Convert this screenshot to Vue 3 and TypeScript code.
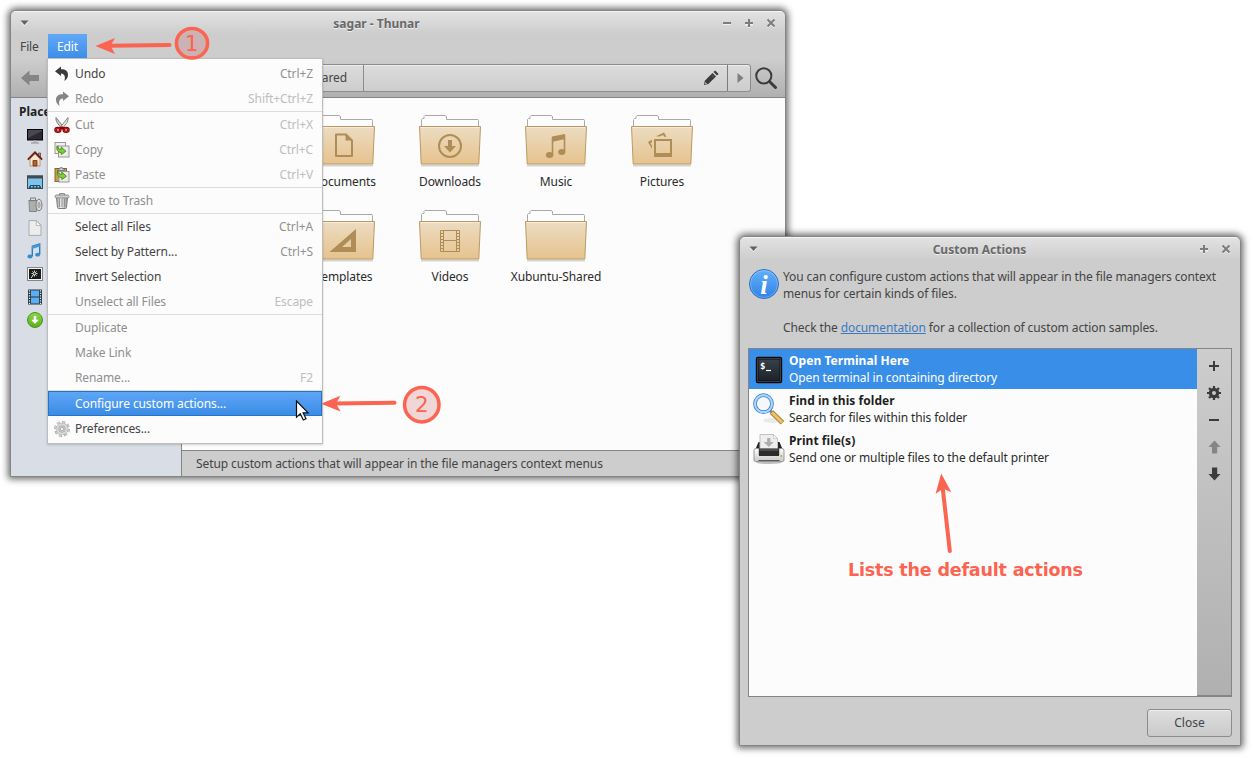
<script setup lang="ts">
interface MenuRow {
  label?: string
  key?: string
  icon?: string
  state?: 'disabled' | 'active'
}

const menu: MenuRow[] = [
  { label: 'Undo', key: 'Ctrl+Z', icon: 'undo' },
  { label: 'Redo', key: 'Shift+Ctrl+Z', icon: 'redo', state: 'disabled' },
  {},
  { label: 'Cut', key: 'Ctrl+X', icon: 'cut', state: 'disabled' },
  { label: 'Copy', key: 'Ctrl+C', icon: 'copy', state: 'disabled' },
  { label: 'Paste', key: 'Ctrl+V', icon: 'paste', state: 'disabled' },
  {},
  { label: 'Move to Trash', icon: 'bin', state: 'disabled' },
  {},
  { label: 'Select all Files', key: 'Ctrl+A' },
  { label: 'Select by Pattern...', key: 'Ctrl+S' },
  { label: 'Invert Selection' },
  { label: 'Unselect all Files', key: 'Escape', state: 'disabled' },
  {},
  { label: 'Duplicate', state: 'disabled' },
  { label: 'Make Link', state: 'disabled' },
  { label: 'Rename...', key: 'F2', state: 'disabled' },
  {},
  { label: 'Configure custom actions...', state: 'active' },
  { label: 'Preferences...', icon: 'gear' },
]

const places: { icon: string; label?: string }[] = [
  { icon: 'monitor' },
  { icon: 'home' },
  { icon: 'desktop' },
  { icon: 'trash', label: 'Trash' },
  { icon: 'doc' },
  { icon: 'music' },
  { icon: 'photo' },
  { icon: 'film', label: 'Videos' },
  { icon: 'download' },
]

const folders = [
  { name: 'Documents', glyph: 'g-doc' },
  { name: 'Downloads', glyph: 'g-down' },
  { name: 'Music', glyph: 'g-music' },
  { name: 'Pictures', glyph: 'g-pic' },
  { name: 'Templates', glyph: 'g-tpl' },
  { name: 'Videos', glyph: 'g-vid' },
  { name: 'Xubuntu-Shared', glyph: '' },
]

const actions = [
  { name: 'Open Terminal Here', text: 'Open terminal in containing directory', icon: 'terminal', on: true },
  { name: 'Find in this folder', text: 'Search for files within this folder', icon: 'lens', on: false },
  { name: 'Print file(s)', text: 'Send one or multiple files to the default printer', icon: 'printer', on: false },
]
</script>

<template>
  <div class="screen">
    <svg class="defs" width="0" height="0">
      <defs>
        <linearGradient id="tan" x1="0" y1="0" x2="0" y2="1">
          <stop offset="0" stop-color="#ecdcc2" /><stop offset="1" stop-color="#e6c38e" />
        </linearGradient>
        <linearGradient id="sky" x1="0" y1="0" x2="0" y2="1">
          <stop offset="0" stop-color="#64b0fb" /><stop offset="1" stop-color="#2f82e6" />
        </linearGradient>
        <linearGradient id="leaf" x1="0" y1="0" x2="0" y2="1">
          <stop offset="0" stop-color="#8ed64a" /><stop offset="1" stop-color="#5cac1c" />
        </linearGradient>
        <linearGradient id="steel" x1="0" y1="0" x2="1" y2="0">
          <stop offset="0" stop-color="#9d9d9d" /><stop offset=".4" stop-color="#ececec" /><stop offset="1" stop-color="#959595" />
        </linearGradient>
        <linearGradient id="slate" x1="0" y1="0" x2="0" y2="1">
          <stop offset="0" stop-color="#37414b" /><stop offset="1" stop-color="#1c2228" />
        </linearGradient>
        <linearGradient id="paper" x1="0" y1="0" x2="0" y2="1">
          <stop offset="0" stop-color="#fdfdfd" /><stop offset="1" stop-color="#c8c8c8" />
        </linearGradient>
      </defs>

      <symbol id="undo" viewBox="0 0 16 16">
        <path d="M1 5.200 7 .6v2.700c4.800 0 7 2 7 5.500 0 2.800-1.300 4.700-3.600 6.200C11.500 11 11 8 7 7.500v2.400Z" fill="#3b3b3b" />
      </symbol>
      <symbol id="redo" viewBox="0 0 16 16">
        <path d="M15 5.200 9 .6v2.700C4.200 3.300 2 5.300 2 8.800c0 2.800 1.300 4.700 3.600 6.200C4.500 11 5 8 9 7.500v2.400Z" fill="#858585" />
      </symbol>
      <symbol id="cut" viewBox="0 0 16 16">
        <path d="M2 .5Q1.500 3 3 5.500L7.400 11.300 9.500 10Z" fill="#d0d3cd" stroke="#686b66" stroke-width=".8" />
        <path d="M14 .5Q14.500 3 13 5.500L8.600 11.300 6.500 10Z" fill="#eceeea" stroke="#686b66" stroke-width=".8" />
        <path d="m5.500 10.500 2.500-1.200 2.500 1.200-1 2h-3Z" fill="#a40000" />
        <ellipse cx="3.900" cy="12.900" rx="2.400" ry="1.800" fill="none" stroke="#800000" stroke-width="2.500" />
        <ellipse cx="12.100" cy="12.900" rx="2.400" ry="1.800" fill="none" stroke="#800000" stroke-width="2.500" />
        <ellipse cx="3.900" cy="12.900" rx="2.400" ry="1.800" fill="none" stroke="#d02020" />
        <ellipse cx="12.100" cy="12.900" rx="2.400" ry="1.800" fill="none" stroke="#d02020" />
      </symbol>
      <symbol id="arrow-leaf" viewBox="0 0 10 10">
        <path d="M1 .8C1 4 2.500 4.500 5 4.500V2.300l4.700 4.100L5 9.900V7.800C1.500 7.800-.5 4.500 1 .8Z" fill="#7fcf35" stroke="#3b7d0c" stroke-width=".8" />
      </symbol>
      <symbol id="copy" viewBox="0 0 16 16">
        <rect x="1" y=".5" width="10.500" height="11" fill="#f0f0f0" stroke="#989898" />
        <rect x="4.500" y="4" width="10.500" height="11" fill="#ebebeb" stroke="#989898" />
        <use href="#arrow-leaf" x="2" y="2.800" width="10.500" height="10" />
      </symbol>
      <symbol id="paste" viewBox="0 0 16 16">
        <rect x="1" y="1.500" width="11.500" height="13" fill="#c99c54" stroke="#8a6528" />
        <path d="M4 3.500V2h1.500L6 .7h2.500L9 2h1.500v1.500Z" fill="#c9c9c9" stroke="#666" stroke-width=".7" />
        <rect x="5" y="4.500" width="10" height="10.500" fill="#ebebeb" stroke="#989898" />
        <use href="#arrow-leaf" x="2.500" y="2.800" width="10.500" height="10" />
      </symbol>
      <symbol id="bin" viewBox="0 0 16 16">
        <path d="M2.500 4.500h11l-1 10q-.2 1-1 1h-7q-.8 0-1-1Z" fill="url(#steel)" stroke="#7c7c7c" />
        <path d="M5.500 6v8M8 6v8M10.500 6v8" stroke="#8b8b8b" stroke-width=".9" />
        <rect x="1" y="2" width="14" height="3" rx="1.500" fill="#cfcfcf" stroke="#777" stroke-width=".8" />
        <path d="M5.500 2V.7h5V2" fill="none" stroke="#777" />
      </symbol>
      <symbol id="gear" viewBox="0 0 16 16">
        <circle cx="8" cy="8" r="6.800" fill="none" stroke="#9b9b9b" stroke-width="2.200" stroke-dasharray="3.100 2.240" />
        <circle cx="8" cy="8" r="6.900" fill="none" stroke="#dedede" stroke-width="1.100" stroke-dasharray="2.300 3.120" stroke-dashoffset="-.4" />
        <circle cx="8" cy="8" r="5.900" fill="#dadada" stroke="#b0b0b0" stroke-width=".6" />
        <circle cx="8" cy="8" r="3.300" fill="#cfcfcf" stroke="#aaa" stroke-width=".8" />
        <circle cx="8" cy="8" r="1.600" fill="#fbfbfb" stroke="#9a9a9a" stroke-width=".7" />
      </symbol>

      <symbol id="monitor" viewBox="0 0 16 16">
        <rect x=".5" y="1.500" width="15" height="10.500" fill="#2d2932" stroke="#050505" />
        <path d="M1 2h14v1L1 10Z" fill="#4b4651" />
        <path d="M6.500 12.500h3l.5 2H6Z" fill="#b9b9b9" />
        <path d="M4 15h8" stroke="#8b8b8b" />
      </symbol>
      <symbol id="home" viewBox="0 0 16 16">
        <path d="M11.500 2h2v5h-2Z" fill="#b0a090" stroke="#5b3020" stroke-width=".7" />
        <path d="M3 8 8 3l5 5v7H3Z" fill="#f8e4cb" stroke="#a38c73" stroke-width=".8" />
        <path d="M.8 8.700 8 1.300l7.200 7.400" fill="none" stroke="#6b1c14" stroke-width="1.700" />
        <path d="M6 15V9.500h4V15Z" fill="#b5622c" stroke="#66310f" stroke-width=".8" />
      </symbol>
      <symbol id="desktop" viewBox="0 0 16 16">
        <rect x=".5" y="2" width="15" height="12.500" fill="#7cc4ee" stroke="#3c4850" />
        <path d="M0 1.500h16v3H0Z" fill="#3f4a52" />
        <path d="M2 14.500v-1.500l1.500-2h9l1.500 2v1.500Z" fill="#284a5c" />
        <path d="M4 12.800h1.700M7.200 12.800h1.700M10.400 12.800h1.700" stroke="#8fd0f5" stroke-width="1.500" />
      </symbol>
      <symbol id="trash" viewBox="0 0 16 16">
        <path d="M2 4h8l-.5 10.500h-7Z" fill="#c3c3c3" stroke="#858585" />
        <path d="M4 5v9M6 5v9M8 5v9" stroke="#8e8e8e" stroke-width=".8" />
        <path d="M3.500 3V1h5v2M1.500 3.500h9" fill="none" stroke="#7c7c7c" />
        <ellipse cx="12" cy="8" rx="3" ry="5.800" fill="#dedede" stroke="#7c7c7c" />
        <ellipse cx="12" cy="8" rx="1.200" ry="2.900" fill="#b7b7b7" stroke="#909090" stroke-width=".6" />
      </symbol>
      <symbol id="doc" viewBox="0 0 16 16">
        <path d="M2 .6h7.500l4.500 4.600v10.200H2Z" fill="#ededed" stroke="#a5a5a5" stroke-width=".9" />
        <path d="M9.300.8v4.700h4.600Z" fill="#fff" stroke="#aaa" stroke-width=".8" />
      </symbol>
      <symbol id="music" viewBox="0 0 16 16">
        <path d="M5.300 13V3.200L12.700 1v10.500" fill="none" stroke="#287fb8" stroke-width="1.400" />
        <path d="M5 3.200 13 .9v2.700L5 6Z" fill="#3f9bd3" />
        <ellipse cx="3" cy="13.500" rx="2.600" ry="1.900" fill="#338fcb" />
        <ellipse cx="10.600" cy="11.700" rx="2.500" ry="1.900" fill="#338fcb" />
      </symbol>
      <symbol id="photo" viewBox="0 0 16 16">
        <rect x=".5" y="1.500" width="15" height="13" fill="#f6f6f6" stroke="#858585" />
        <path d="M2 3h12v10H2Z" fill="#1b1b1b" />
        <path d="M7.500 4.500v6M4.500 7.500h6M5.400 5.400l4.200 4.200M9.600 5.400l-4.200 4.200M4 12l3-4" stroke="#eee" stroke-width=".9" />
        <circle cx="7.500" cy="7.500" r="1" fill="#222" />
      </symbol>
      <symbol id="film" viewBox="0 0 16 16">
        <path d="M1 .5h14v15H1Z" fill="#26343d" />
        <path d="M4 1.500h8v6H4ZM4 8.500h8v6H4Z" fill="#5baef4" />
        <path d="M2.500 1.200v14M13.500 1.200v14" stroke="#f2f2f2" stroke-width="1.300" stroke-dasharray="1.300 1.200" />
      </symbol>
      <symbol id="download" viewBox="0 0 16 16">
        <circle cx="8" cy="8" r="7.500" fill="url(#leaf)" stroke="#4b9618" />
        <path d="M6.700 4h2.600v3.700h2.600L8 12 4.100 7.700h2.600Z" fill="#fff" />
      </symbol>

      <symbol id="folder" viewBox="0 0 64 52">
        <path d="M3 50.500h58" stroke="#000" stroke-opacity=".16" stroke-width="2" />
        <path d="M3.500 14V4.500l1-1H6V1.500L7 .5h20l1.500 1v3H60l.5 1V14Z" fill="#fcfcfc" stroke="#a9a9ab" />
        <path d="M1.500 11.500h61L60.800 49H3.200Z" fill="url(#tan)" stroke="#bb9a62" stroke-linejoin="round" />
        <path d="M2.500 12.500h59" stroke="#f7ecd9" />
      </symbol>
      <symbol id="g-doc" viewBox="0 0 64 52">
        <path d="M24 19.500h10l6 6V41H24Z" fill="none" stroke="#b08d56" stroke-width="2" stroke-linejoin="round" />
        <path d="M33.500 18.800v6.700h7Z" fill="#b08d56" />
      </symbol>
      <symbol id="g-down" viewBox="0 0 64 52">
        <circle cx="32" cy="31" r="11" fill="none" stroke="#b08d56" stroke-width="2" />
        <path d="M30 25h4v6h4l-6 6.500-6-6.500h4Z" fill="#b08d56" />
      </symbol>
      <symbol id="g-music" viewBox="0 0 64 52">
        <path d="M28 21.500 41 19v5l-13 3Z" fill="#b08d56" />
        <path d="M28.500 22v18M40.500 20v17" stroke="#b08d56" stroke-width="1.600" />
        <ellipse cx="25.600" cy="40" rx="3.700" ry="2.900" fill="#b08d56" />
        <ellipse cx="37.800" cy="37" rx="3.600" ry="2.900" fill="#b08d56" />
      </symbol>
      <symbol id="g-pic" viewBox="0 0 64 52">
        <path d="M24 24h18v18H24Zm2 2v12h14V26Z" fill="#b08d56" fill-rule="evenodd" />
        <path d="m18 27 4-2.300v2.500l-1.500.8 1.500 2.800v3Z" fill="#b08d56" />
        <path d="m26 21.200 8-3.700 2.500 4.200h-2.300l-1-1.700-3.800 1.600Z" fill="#b08d56" />
      </symbol>
      <symbol id="g-tpl" viewBox="0 0 64 52">
        <path d="M17.500 42 44 19v23Zm12.500-5h9v-8Z" fill="#b08d56" fill-rule="evenodd" />
      </symbol>
      <symbol id="g-vid" viewBox="0 0 64 52">
        <path d="M22.500 20.500h19v21h-19ZM25.500 20.500v21M38.500 20.500v21M25.500 30.500h13" fill="none" stroke="#b08d56" />
        <path d="M22 23.500h3M22 26.500h3M22 29.500h3M22 32.500h3M22 35.500h3M22 38.500h3M39 23.500h3M39 26.500h3M39 29.500h3M39 32.500h3M39 35.500h3M39 38.500h3" stroke="#b08d56" />
      </symbol>

      <symbol id="lens" viewBox="0 0 32 32">
        <ellipse cx="19" cy="27.500" rx="9" ry="2.500" fill="#000" opacity=".07" />
        <path d="m18.500 19 11 10.800" stroke="#a9802f" stroke-width="5" />
        <path d="m18.500 19 10.600 10.400" stroke="#ecc36c" stroke-width="3" />
        <path d="m16 16.500 3 3" stroke="#888" stroke-width="3" />
        <circle cx="10.500" cy="10.700" r="8.500" fill="#f4f8fb" stroke="#3b7ed0" stroke-width="3.700" />
        <circle cx="10.500" cy="10.700" r="8.500" fill="none" stroke="#a9d7f8" stroke-width="2.200" />
      </symbol>
      <symbol id="printer" viewBox="0 0 32 32">
        <ellipse cx="16" cy="29.500" rx="13" ry="1.500" fill="#000" opacity=".25" />
        <path d="M5.500 9h21l3 7h-27Z" fill="#252525" />
        <path d="M7 1.500h13.500l4 4V16H7Z" fill="#eee" stroke="#c2c2c2" />
        <path d="M20.500 1.700v3.800h3.800Z" fill="#fff" stroke="#bbb" stroke-width=".6" />
        <path d="M14.200 5h3.200v4h3.400l-5 5-5-5h3.400Z" fill="#adadad" />
        <path d="M1 17.500q0-2 2-2h3V22h20v-6.500h3q2 0 2 2v9.500q0 1.500-1.500 1.500h-27Q1 28.500 1 27Z" fill="url(#paper)" stroke="#909090" stroke-width=".9" />
        <path d="M6 15.500h20V23H6Z" fill="#2b2b2b" />
        <path d="M6.500 16h19v2h-19Z" fill="#4c4c4c" />
        <path d="M5.500 27.500h21" stroke="#5a5a5a" />
        <circle cx="28.200" cy="23" r=".9" fill="#79c437" />
      </symbol>
      <symbol id="terminal" viewBox="0 0 32 32">
        <rect x="3.500" y="4.500" width="25" height="25" rx="1.500" fill="#7e868e" stroke="#07090b" stroke-width="1.400" />
        <rect x="5" y="6" width="22" height="22" fill="url(#slate)" stroke="#0d1013" />
        <path d="M13 17.500h5" stroke="#fff" stroke-width="1.200" />
      </symbol>
      <symbol id="tri" viewBox="0 0 9 6">
        <path d="M.5 1h8l-4 4.300Z" fill="#fff" opacity=".7" transform="translate(0 .7)" />
        <path d="M.5.5h8l-4 4.500Z" fill="#626262" />
      </symbol>
      <symbol id="min" viewBox="0 0 10 10">
        <path d="M1 6.500h8" stroke="#f0f0f0" /><path d="M1 5h8" stroke="#7c7c7c" stroke-width="2" />
      </symbol>
      <symbol id="max" viewBox="0 0 10 10">
        <path d="M1 6.500h8M5 2v8.200" stroke="#f0f0f0" stroke-width="1.800" /><path d="M1 5h8M5 1v8" stroke="#7c7c7c" stroke-width="2" />
      </symbol>
      <symbol id="shut" viewBox="0 0 10 10">
        <path d="m1.500 2.500 7 7m0-7-7 7" stroke="#f0f0f0" stroke-width="2" /><path d="m1.500 1.500 7 7m0-7-7 7" stroke="#7c7c7c" stroke-width="2" />
      </symbol>
    </svg>

    <section class="window thunar">
      <header class="titlebar">
        <svg class="roll"><use href="#tri" /></svg>
        <span class="title">sagar - Thunar</span>
        <span class="buttons">
          <svg><use href="#min" /></svg>
          <svg><use href="#max" /></svg>
          <svg><use href="#shut" /></svg>
        </span>
      </header>
      <nav class="menubar">
        <span class="menu-head">File</span>
        <span class="menu-head open">Edit</span>
      </nav>
      <div class="toolbar">
        <svg class="back" viewBox="0 0 18 16"><path d="M0 8 8.500.5V5H18v6H8.500v4.500Z" fill="#858585" /></svg>
        <div class="pathbar">
          <span class="crumb">Xubuntu-Shared</span>
          <span class="rest">
            <svg class="pencil" viewBox="0 0 16 16">
              <path d="m1 15 .8-4.300L9.500 3 13 6.500 5.300 14Z" fill="#393939" />
              <path d="m10.500 2 1.600-1.600 3.500 3.500L14 5.500Z" fill="#393939" />
              <path d="m2.300 12.100 1.700 1.700-1.700.4Z" fill="#ddd" />
              <path d="m8.800 5.200 2 2" stroke="#888" stroke-width=".6" />
            </svg>
          </span>
          <span class="next"><svg viewBox="0 0 7 10"><path d="M.5 0 6.500 5 .5 10Z" fill="#7e7e7e" /></svg></span>
        </div>
        <svg class="search" viewBox="0 0 22 22">
          <circle cx="8.800" cy="8.800" r="7.600" fill="none" stroke="#3c3c3c" stroke-width="2" />
          <path d="m14.500 14.500 6 6" stroke="#3c3c3c" stroke-width="3" stroke-linecap="round" />
        </svg>
      </div>
      <div class="panes">
        <aside class="sidebar">
          <div class="heading">Places</div>
          <div v-for="p in places" :key="p.icon" class="place">
            <svg><use :href="'#' + p.icon" /></svg>
            <span>{{ p.label }}</span>
          </div>
        </aside>
        <div class="content">
          <div class="files">
            <figure v-for="f in folders" :key="f.name" class="file">
              <svg viewBox="0 0 64 52">
                <use href="#folder" />
                <use v-if="f.glyph" :href="'#' + f.glyph" />
              </svg>
              <figcaption>{{ f.name }}</figcaption>
            </figure>
          </div>
          <footer class="status">Setup custom actions that will appear in the file managers context menus</footer>
        </div>
      </div>
    </section>

    <div class="menu">
      <template v-for="(m, i) in menu" :key="i">
        <div v-if="m.label" class="item" :class="m.state">
          <svg class="item-icon"><use v-if="m.icon" :href="'#' + m.icon" /></svg>
          <span class="item-label">{{ m.label }}</span>
          <span class="key">{{ m.key }}</span>
        </div>
        <div v-else class="rule"></div>
      </template>
    </div>

    <section class="window dialog">
      <header class="titlebar">
        <svg class="roll"><use href="#tri" /></svg>
        <span class="title">Custom Actions</span>
        <span class="buttons">
          <svg><use href="#max" /></svg>
          <svg><use href="#shut" /></svg>
        </span>
      </header>
      <div class="intro">
        <svg class="info" viewBox="0 0 32 32">
          <circle cx="16" cy="16" r="14.500" fill="url(#sky)" stroke="#2d6fc0" />
          <circle cx="16" cy="16" r="13.500" fill="none" stroke="#fff" stroke-opacity=".25" />
          <text x="16" y="26" text-anchor="middle" class="info-i">i</text>
        </svg>
        <p>You can configure custom actions that will appear in the file managers context<br>menus for certain kinds of files.<br><br>Check the <a>documentation</a> for a collection of custom action samples.</p>
      </div>
      <div class="box">
        <div class="list">
          <div v-for="a in actions" :key="a.name" class="action" :class="{ on: a.on }">
            <svg viewBox="0 0 32 32">
              <use :href="'#' + a.icon" />
              <text v-if="a.icon === 'terminal'" x="7" y="16" class="prompt">$</text>
            </svg>
            <div>
              <b>{{ a.name }}</b>
              <span>{{ a.text }}</span>
            </div>
          </div>
        </div>
        <div class="tools">
          <svg viewBox="0 0 14 14"><path d="M2 7h10M7 2v10" stroke="#3b3b3b" stroke-width="2" /></svg>
          <svg viewBox="0 0 14 14">
            <circle cx="7" cy="7" r="3.600" fill="none" stroke="#3b3b3b" stroke-width="3.200" />
            <path d="M7 0v3M7 11v3M0 7h3M11 7h3M2 2l2 2M10 10l2 2M2 12l2-2M10 4l2-2" stroke="#3b3b3b" stroke-width="2.200" />
          </svg>
          <svg viewBox="0 0 14 14"><path d="M2 7h10" stroke="#3b3b3b" stroke-width="2" /></svg>
          <svg viewBox="0 0 14 14"><path d="M7.500.5 13.500 7h-3.300v6.500H5V7H1.500Z" fill="#858585" /></svg>
          <svg viewBox="0 0 14 14"><path d="M7.500 13.500 13.500 7h-3.300V.5H5V7H1.500Z" fill="#3b3b3b" /></svg>
        </div>
      </div>
      <div class="foot"><button type="button">Close</button></div>
    </section>

    <svg class="notes" width="1253" height="758" viewBox="0 0 1253 758">
      <g fill="#fa6450" stroke="#fa6450">
        <path d="M108 45.800 169.500 45" stroke-width="4" stroke-linecap="round" />
        <path d="m95.500 46 19.500-8-4.500 7.800L115 54Z" stroke="none" />
        <path d="M334 403.500 394.500 402.700" stroke-width="4" stroke-linecap="round" />
        <path d="m321 403.700 19.500-8-4.500 7.700 4.500 8.100Z" stroke="none" />
        <path d="m942.700 488 7.100 63" stroke-width="4" stroke-linecap="round" />
        <path d="m941.200 473.500 10.200 18.700-8.200-3.400-7.600 5Z" stroke="none" />
      </g>
      <g fill="#c85050" fill-opacity=".22" stroke="#fa6450" stroke-width="3.500">
        <ellipse cx="192" cy="43.300" rx="15.600" ry="14.800" />
        <circle cx="421.800" cy="404.700" r="17.200" />
      </g>
      <g class="note-text">
        <text x="191.800" y="51" text-anchor="middle" font-size="21">1</text>
        <text x="421.800" y="412" text-anchor="middle" font-size="21.500">2</text>
        <text x="848" y="576" font-size="17.500" font-weight="700" textLength="235">Lists the default actions</text>
      </g>
      <path d="M296.500 401v16.200l3.800-3.400 3 6.200 2.700-1.300-2.900-5.900h5Z" fill="#fff" stroke="#111" stroke-width="1.200" />
    </svg>
  </div>
</template>

<style>
body {
  background: #fff;
  overflow: hidden;
}
</style>

<style scoped>
.screen {
  position: relative;
  width: 1253px;
  height: 758px;
  background: #fff;
  overflow: hidden;
  color: #444;
  font: 12px/17px "Noto Sans", "Open Sans", sans-serif;
  letter-spacing: -.1px;
}
.screen * { box-sizing: border-box; }
svg { display: block; flex: none; }
.defs { position: absolute; }
.window {
  position: absolute;
  display: flex;
  flex-direction: column;
  border: 1px solid #858585;
  border-radius: 6px 6px 0 0;
  background: #cdcdcd;
  box-shadow: 0 0 7px 2px rgba(0, 0, 0, .6);
  overflow: hidden;
}
.thunar { left: 10px; top: 10px; width: 776px; height: 467px; }
.dialog { left: 739px; top: 236px; width: 502px; height: 510px; }
.titlebar {
  height: 23px;
  flex: none;
  display: grid;
  grid-template-columns: 76px 1fr 76px;
  align-items: center;
  border-top: 1px solid #f6f6f6;
  background: linear-gradient(#e2e2e2, #cdcdcd);
}
.roll { width: 9px; height: 6px; margin-left: 9px; }
.title {
  text-align: center;
  font-weight: 700;
  letter-spacing: 0;
  color: #696969;
  text-shadow: 0 1px 0 #eee;
  padding-top: 1px;
}
.thunar .title { padding-right: 43px; }
.dialog .title { padding-right: 21px; }
.buttons { display: flex; gap: 12px; justify-content: flex-end; padding-right: 9px; }
.buttons svg { width: 10px; height: 10px; }
.menubar { display: flex; height: 25px; flex: none; }
.menu-head { padding: 4px 9px; line-height: 17px; width: 37px; }
.menu-head.open { background: linear-gradient(#62a8f8, #3b8de8); color: #fff; width: 39px; }
.toolbar {
  display: flex;
  align-items: center;
  flex: none;
  height: 39px;
  padding: 0 8px 1px 10px;
  border-bottom: 1px solid #858585;
  background: linear-gradient(#cdcdcd, #b0b0b0);
}
.back { width: 18px; height: 16px; }
.pathbar {
  display: flex;
  margin: 0 4px 0 200px;
  flex: 1;
  height: 28px;
  border: 1px solid #8c8c8c;
  border-radius: 3px;
  background: linear-gradient(#dcdcdc, #cdcdcd);
  box-shadow: inset 0 1px #eee;
}
.crumb {
  width: 124px;
  padding: 4px 16px 0 0;
  text-align: right;
  border-right: 1px solid #8c8c8c;
}
.rest { flex: 1; display: flex; justify-content: flex-end; align-items: center; padding-right: 8px; }
.pencil { width: 16px; height: 16px; }
.next { width: 23px; border-left: 1px solid #7c7c7c; display: flex; align-items: center; justify-content: center; padding-left: 2px; }
.next svg { width: 7px; height: 10px; }
.search { width: 22px; height: 22px; }
.panes { display: flex; flex: 1; min-height: 0; }
.sidebar { width: 170px; background: #d9dee6; }
.heading { font-weight: 700; letter-spacing: 0; color: #222; padding: 5px 0 0 8px; height: 26px; }
.place { display: flex; align-items: center; gap: 4px; height: 23px; padding-left: 16px; }
.place svg { width: 16px; height: 16px; }
.content { flex: 1; display: flex; flex-direction: column; border-left: 1px solid #858585; background: #fcfcfc; }
.files {
  flex: 1;
  display: grid;
  grid-template-columns: repeat(4, 106px);
  grid-auto-rows: 95px;
  padding: 17px 0 0 109px;
}
.file { margin: 0; display: flex; flex-direction: column; align-items: center; color: #2b2b2b; white-space: nowrap; }
.file svg { width: 64px; height: 52px; margin-bottom: 6px; }
.status { height: 26px; flex: none; padding: 4px 14px; background: #cdcdcd; border-top: 1px solid #858585; }
.menu {
  position: absolute;
  left: 47px;
  top: 58px;
  width: 276px;
  height: 386px;
  padding: 2px 0;
  background: #fcfcfc;
  border: 1px solid #bdbdbd;
  box-shadow: 0 1px 2px rgba(0, 0, 0, .18);
}
.item { display: flex; align-items: center; height: 25px; padding: 0 9px 0 6px; }
.item-icon { width: 16px; height: 16px; margin-right: 5px; }
.item-label { flex: 1; }
.key { color: #919191; }
.item.disabled { color: #8f8f8f; }
.item.disabled .key { color: #bebebe; }
.item.active {
  color: #fff;
  background: linear-gradient(#5fa7f8, #398be5);
  box-shadow: inset 0 0 0 1px #2a73c2;
}
.rule { height: 1px; background: #dcdcdc; }
.intro { display: flex; padding: 8px 0 0 8px; height: 88px; }
.info { width: 32px; height: 32px; margin-right: 3px; }
.intro p { margin: 0; white-space: nowrap; }
.intro a { color: #3a7ac0; text-decoration: underline; }
.info-i { font: italic 700 27px "Liberation Serif", serif; fill: #fff; }
.prompt { font: 700 9px "DejaVu Sans Mono", monospace; fill: #fff; }
.box { display: flex; margin: 0 8px; height: 349px; border: 1px solid #858585; }
.list { flex: 1; background: #fcfcfc; }
.action { display: flex; align-items: center; gap: 4px; height: 40px; padding-left: 4px; color: #2b2b2b; }
.action svg { width: 32px; height: 32px; }
.action b, .action span { display: block; }
.action b { color: #1e1e1e; letter-spacing: .05px; }
.action.on, .action.on b { color: #fff; }
.action.on { background: #398ee7; }
.tools {
  width: 34px;
  display: flex;
  flex-direction: column;
  align-items: center;
  gap: 13px;
  padding-top: 10px;
  background: linear-gradient(#cdcdcd, #b0b0b0);
  border-bottom: 1px solid #858585;
}
.tools svg { width: 14px; height: 14px; }
.foot { display: flex; justify-content: flex-end; padding: 12px 8px 0; }
.foot button {
  width: 85px;
  height: 28px;
  padding: 0 0 2px;
  color: #444;
  font: inherit;
  border: 1px solid #8c8c8c;
  border-radius: 3px;
  background: linear-gradient(#dedede, #cacaca);
  box-shadow: inset 0 1px #eee;
}
.notes { position: absolute; left: 0; top: 0; }
.note-text { font-family: "DejaVu Sans", sans-serif; fill: #fa6450; letter-spacing: 0; }
</style>
